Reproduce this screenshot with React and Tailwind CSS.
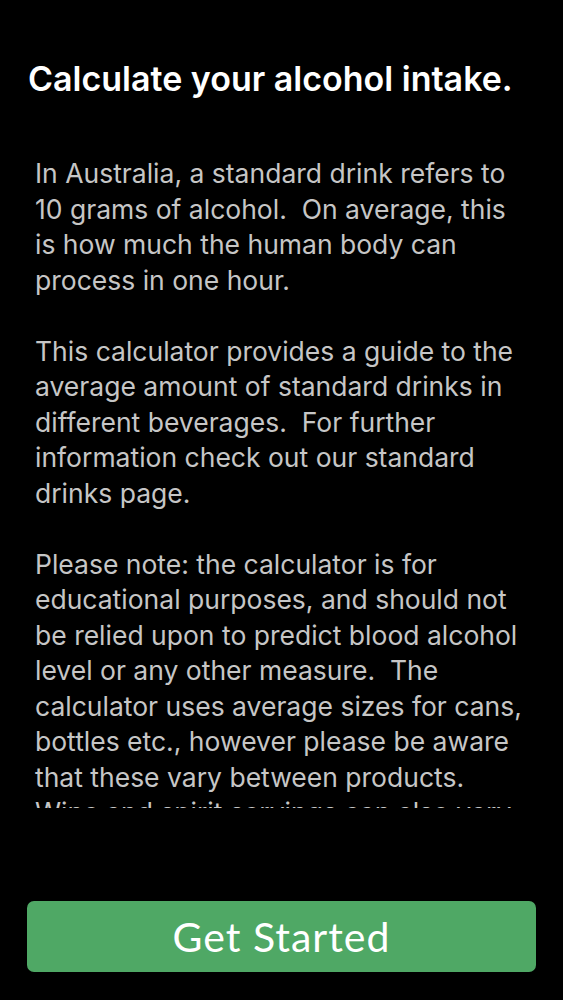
import React from 'react';

const paragraphs = [
  [
    'In Australia, a standard drink refers to',
    '10 grams of alcohol.  On average, this',
    'is how much the human body can',
    'process in one hour.',
  ],
  [
    'This calculator provides a guide to the',
    'average amount of standard drinks in',
    'different beverages.  For further',
    'information check out our standard',
    'drinks page.',
  ],
  [
    'Please note: the calculator is for',
    'educational purposes, and should not',
    'be relied upon to predict blood alcohol',
    'level or any other measure.  The',
    'calculator uses average sizes for cans,',
    'bottles etc., however please be aware',
    'that these vary between products.',
    'Wine and spirit servings can also vary.',
  ],
];

export default function App() {
  return (
    <div className="h-[1000px] bg-black flex flex-col" style={{ fontFamily: 'Inter, "Liberation Sans", sans-serif' }}>
      {/* Title */}
      <h1 className="pt-[59px] px-[28px] text-[34px] leading-[40px] font-semibold text-white whitespace-nowrap">
        Calculate your alcohol intake.
      </h1>

      {/* Scrolling text */}
      <div className="mt-[41px] h-[668px] overflow-hidden px-[35px] pt-[16px]">
        {paragraphs.map((lines, i) => (
          <div key={i} className={i > 0 ? 'mt-[35.5px]' : ''}>
            {lines.map((line) => (
              <div key={line} className="text-[26.5px] leading-[35.5px] text-[#c6c6c6] whitespace-pre">
                {line}
              </div>
            ))}
          </div>
        ))}
      </div>

      <div className="flex-1" />

      {/* Button */}
      <button
        className="mx-[27px] mb-[28px] h-[71px] rounded-[7px] bg-[#4fa865] text-white text-[41px] tracking-[1px]"
        style={{ fontFamily: 'Lato, "Open Sans", sans-serif' }}
      >
        Get Started
      </button>
    </div>
  );
}
